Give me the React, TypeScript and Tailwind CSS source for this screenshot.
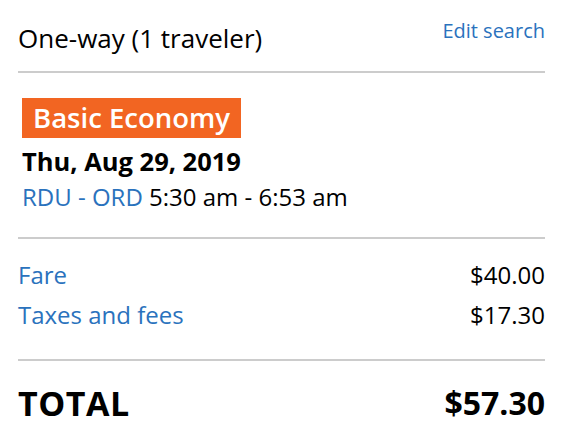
export default function App() {
  return (
    <div className="w-[562px] h-[432px] bg-white pl-[18px] pr-[17px] font-['Open_Sans',sans-serif] text-black overflow-hidden">
      {/* Header */}
      <div className="flex justify-between items-start pt-[19px] h-[71px]">
        <span className="text-[26px] leading-[30px] mt-[4px]">One-way (1 traveler)</span>
        <a href="#" className="text-[20px] leading-[24px] text-[#2a72bd]">
          Edit search
        </a>
      </div>
      <div className="h-[2px] bg-[#cccccc]" />

      {/* Flight */}
      <div className="pt-[25px] pb-[25px] pl-[4px]">
        <div className="inline-block bg-[#f26522] text-white font-semibold text-[27.5px] leading-[40px] px-[11px]">
          Basic Economy
        </div>
        <div className="font-bold text-[25.5px] leading-[30px] mt-[8px]">Thu, Aug 29, 2019</div>
        <div className="text-[24px] leading-[30px] mt-[6px]">
          <span className="text-[#2a72bd]">RDU - ORD</span> 5:30 am - 6:53 am
        </div>
      </div>
      <div className="h-[2px] bg-[#cccccc]" />

      {/* Fare breakdown */}
      <div className="flex flex-col gap-[10px] pt-[21px] pb-[29px] text-[24px] leading-[30px]">
        <div className="flex justify-between">
          <a href="#" className="text-[#2a72bd]">Fare</a>
          <span>$40.00</span>
        </div>
        <div className="flex justify-between">
          <a href="#" className="text-[#2a72bd]">Taxes and fees</a>
          <span>$17.30</span>
        </div>
      </div>
      <div className="h-[2px] bg-[#cccccc]" />

      {/* Total */}
      <div className="flex justify-between items-center pt-[22px] font-bold leading-[40px]">
        <span className="text-[34px] tracking-[0.5px]">TOTAL</span>
        <span className="text-[32px]">$57.30</span>
      </div>
    </div>
  )
}
